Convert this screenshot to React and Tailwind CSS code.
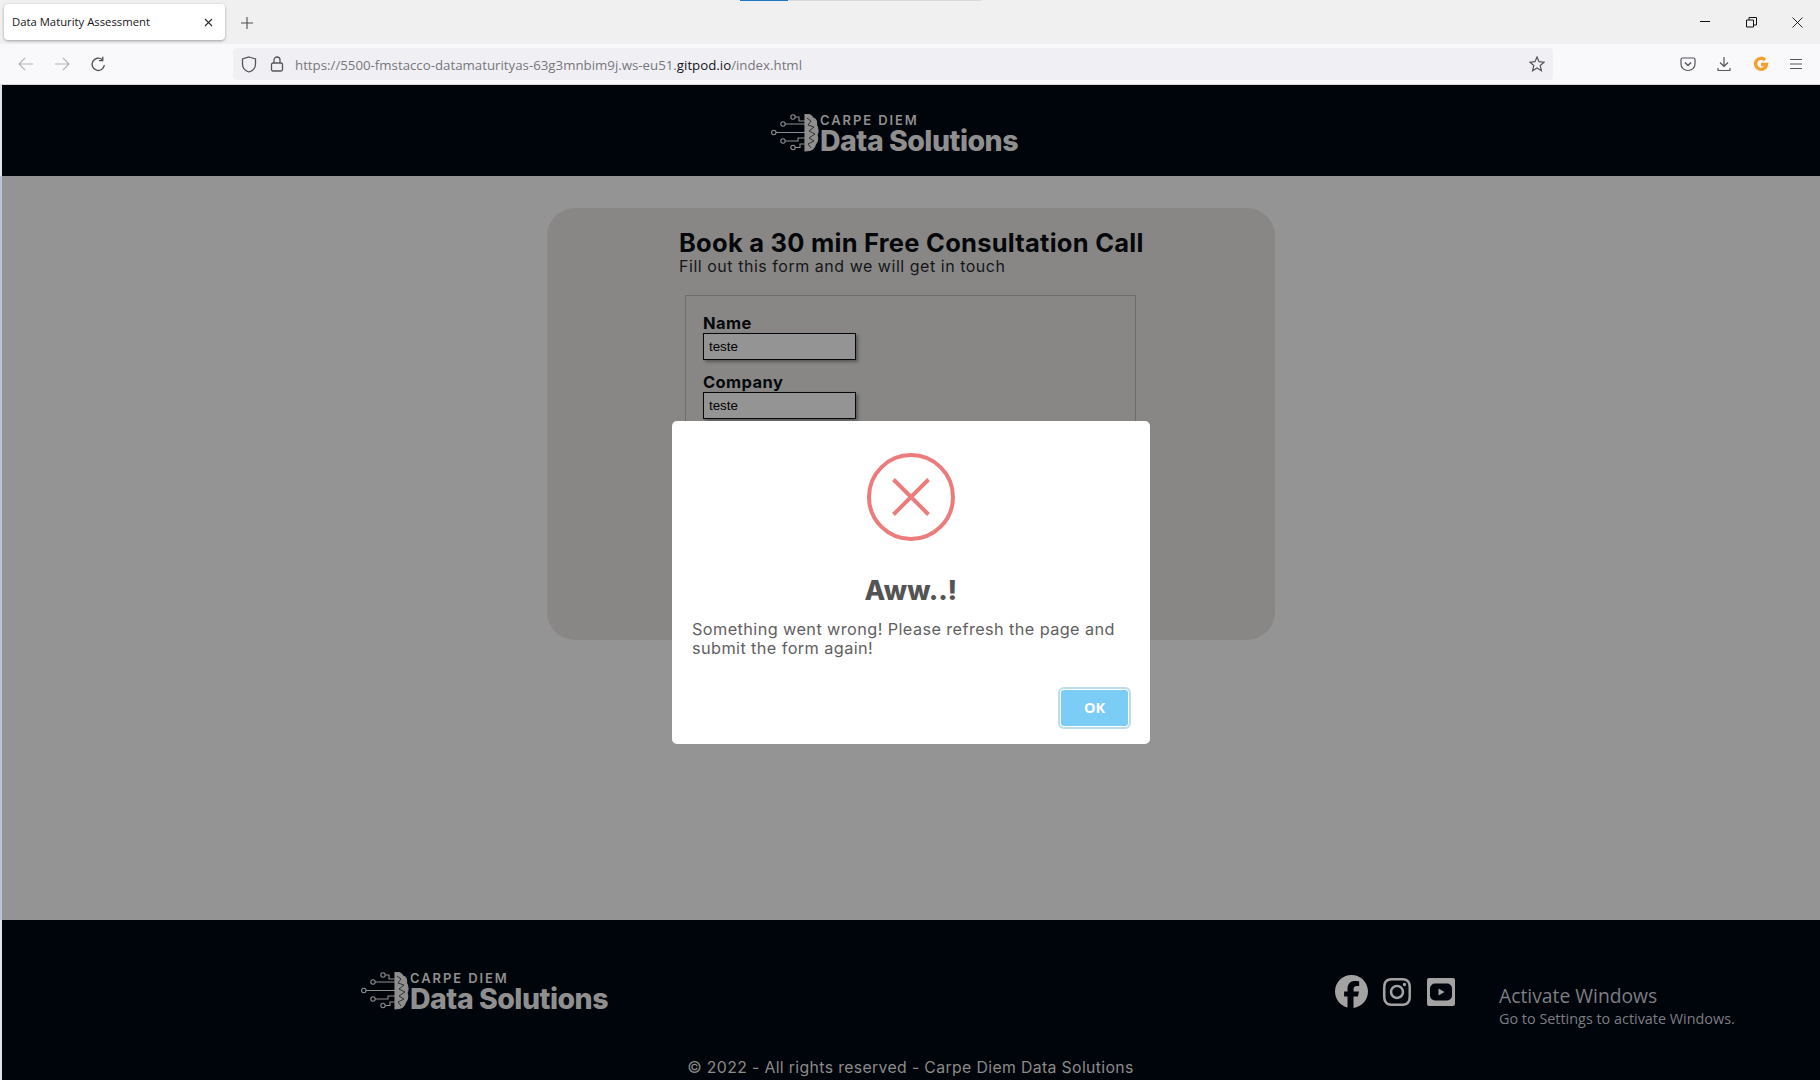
import React from "react";
import { FaFacebook, FaInstagram } from "react-icons/fa6";

const mont = "font-['Inter','Open_Sans',sans-serif]";

function Logo() {
  return (
    <div className="flex items-start h-[41px] w-[250px] shrink-0">
      <svg width="48" height="38" viewBox="0 0 48 38" fill="none" stroke="#8f8f8f" strokeWidth="1.100" className="shrink-0">
        <circle cx="2.800" cy="18.500" r="2.200" />
        <circle cx="12" cy="10" r="2.200" />
        <circle cx="12" cy="27" r="2.200" />
        <circle cx="22" cy="3" r="2.200" />
        <circle cx="22" cy="33.500" r="2.200" />
        <path d="M5 18.500H34M14.200 10H34M14.200 27H27V24H34M24.200 3H28V7H34M24.200 33.500H29V30H34" />
        <path d="M34 0.500C38 -0.500 41 1.500 42 4C45 5 46 8 45.500 11C47.500 14 47.500 19 46 21C47.500 25 46.500 28 44.500 30C44 34 41 37 34 37Z" fill="#8f8f8f" />
        <path d="M36 4L40 7L37 11L43 13L38 17L44 20L38 24L43 27L37 30L40 34" stroke="#24262a" strokeWidth="0.900" />
      </svg>
      <div className={`flex flex-col ml-[1px] ${mont} text-[#8f8f8f]`}>
        <span className="text-[13px] leading-[13px] font-semibold tracking-[1.900px] whitespace-nowrap">CARPE DIEM</span>
        <span className="text-[28.500px] leading-[28px] font-extrabold tracking-[-0.5px] whitespace-nowrap">Data Solutions</span>
      </div>
    </div>
  );
}

function TabBar() {
  return (
    <div className="relative h-[44px] bg-[#f0f0f0] flex items-start pl-[4px] pt-[4px] shrink-0">
      <div className="h-[36px] w-[221px] bg-white rounded-[4px] shadow-[0_1px_3px_rgba(0,0,0,0.35)] flex items-center pl-[8px] pr-[12px] justify-between">
        <span className="font-['Open_Sans',sans-serif] text-[11.300px] pt-[1px] text-[#15141a] whitespace-nowrap">Data Maturity Assessment</span>
        <svg width="9" height="9" viewBox="0 0 9 9" stroke="#2b2a33" strokeWidth="1.100"><path d="M1 1L8 8M8 1L1 8" /></svg>
      </div>
      <svg width="12" height="12" viewBox="0 0 12 12" stroke="#4f4e55" strokeWidth="1.100" className="ml-[16px] mt-[13px]"><path d="M6 0V12M0 6H12" /></svg>
      <div className="absolute top-0 left-[740px] w-[48px] h-[1px] bg-[#1f78c1]" />
      <div className="absolute top-0 left-[788px] w-[193px] h-[1px] bg-[#d9d9d9]" />
      <div className="absolute top-[21px] left-[1700px] w-[10px] h-[1px] bg-[#111]" />
      <svg width="11" height="11" viewBox="0 0 11 11" fill="none" stroke="#111" strokeWidth="1" className="absolute top-[17px] left-[1746px]">
        <path d="M0.500 3H7.500V10H0.500ZM3 3V0.500H10.500V8H7.500" />
      </svg>
      <svg width="11" height="11" viewBox="0 0 11 11" stroke="#111" strokeWidth="0.900" className="absolute top-[17px] left-[1792px]"><path d="M0.500 0.500L10.500 10.500M10.500 0.500L0.500 10.500" /></svg>
    </div>
  );
}

function ToolBar() {
  return (
    <div className="h-[40px] bg-[#f9f9fb] flex items-center shrink-0 relative">
      <svg width="18" height="16" viewBox="0 0 18 16" fill="none" stroke="#b5b5b8" strokeWidth="1.200" className="ml-[17px]"><path d="M16 8H2M8 2L2 8L8 14" /></svg>
      <svg width="18" height="16" viewBox="0 0 18 16" fill="none" stroke="#b5b5b8" strokeWidth="1.200" className="ml-[18px]"><path d="M2 8H16M10 2L16 8L10 14" /></svg>
      <svg width="17" height="17" viewBox="0 0 16 16" fill="none" stroke="#55545b" strokeWidth="1.300" className="ml-[19px]"><path d="M13.500 8.500A5.800 5.800 0 1 1 11.500 3.400" /><path d="M12 0.800V4.400H8.400" /></svg>
      <div className="ml-[126px] w-[1320px] h-[32px] bg-[#f0f0f4] rounded-[4px] flex items-center pl-[8px] pr-[8px]">
        <svg width="16" height="17" viewBox="0 0 16 17" fill="none" stroke="#55545b" strokeWidth="1.300" className="shrink-0"><path d="M8 1L14.500 3V8C14.500 12 11.500 15 8 16C4.500 15 1.500 12 1.500 8V3Z" /></svg>
        <svg width="14" height="16" viewBox="0 0 14 16" fill="none" stroke="#55545b" strokeWidth="1.300" className="shrink-0 ml-[13px]"><rect x="1.500" y="7" width="11" height="8" rx="1.500" /><path d="M4 7V4A3 3 0 0 1 10 4V7" /></svg>
        <span className="ml-[11px] pt-[3px] font-['Open_Sans',sans-serif] text-[13.280px] text-[#77767c] whitespace-nowrap">
          https://5500-fmstacco-datamaturityas-63g3mnbim9j.ws-eu51.<span className="text-[#15141a]">gitpod.io</span>/index.html
        </span>
        <svg width="16" height="16" viewBox="0 0 16 16" fill="none" stroke="#55545b" strokeWidth="1.200" className="ml-auto"><path d="M8 1L10 5.700L15 6.200L11.200 9.500L12.400 14.700L8 12L3.600 14.700L4.800 9.500L1 6.200L6 5.700Z" /></svg>
      </div>
      <svg width="16" height="16" viewBox="0 0 16 16" fill="none" stroke="#55545b" strokeWidth="1.200" className="ml-[127px]"><path d="M2.500 2H13.500A1.500 1.500 0 0 1 15 3.500V8A7 6.500 0 0 1 1 8V3.500A1.500 1.500 0 0 1 2.500 2Z" /><path d="M5 6.500L8 9.500L11 6.500" strokeWidth="1.500" /></svg>
      <svg width="16" height="16" viewBox="0 0 16 16" fill="none" stroke="#55545b" strokeWidth="1.200" className="ml-[20px]"><path d="M8 1V10M4 6.500L8 10.500L12 6.500M2 12V14.500H14V12" /></svg>
      <svg width="16" height="16" viewBox="0 0 16 16" fill="none" stroke="#f4a030" strokeWidth="3.400" className="ml-[21px]"><path d="M12 4A5.500 5.500 0 1 0 13.500 8.500H8" /></svg>
      <svg width="14" height="12" viewBox="0 0 14 12" fill="none" stroke="#55545b" strokeWidth="1.200" className="ml-[20px]"><path d="M1 1.500H13M1 6H13M1 10.500H13" /></svg>
    </div>
  );
}

function Field({ label }) {
  return (
    <div className="flex flex-col">
      <label className={`${mont} text-[16.500px] leading-[16px] font-bold tracking-[0.4px] text-[#06080c]`}>{label}</label>
      <input readOnly value="teste" className="mt-[2px] w-[153px] h-[27px] bg-[#949494] border-[1px] border-[#05070a] shadow-[2px_2px_3px_rgba(0,0,0,0.35)] px-[5px] font-['Liberation_Sans',sans-serif] text-[13.300px] text-black outline-none" />
    </div>
  );
}

export default function App() {
  return (
    <div className="relative w-[1820px] h-[1080px] overflow-hidden bg-[#949494] flex flex-col">
      <TabBar />
      <ToolBar />
      <main className="flex-1 flex flex-col">
        <header className="h-[92px] bg-[#00040b] flex items-center justify-center shrink-0 border-t border-t-[#d8d8d8] border-l-2 border-l-[#e0e3ea]">
          <div className="mr-[30px] mt-[8px]"><Logo /></div>
        </header>
        <section className="flex-1 bg-[#949494] pt-[32px] flex justify-center border-l-2 border-l-[#bcc3d8]">
          <div className="w-[728px] h-[432px] bg-[#888785] rounded-[28px] pl-[132px] pt-[20px]">
            <h1 className={`${mont} text-[25.500px] leading-[30px] font-bold text-[#05070b] tracking-[0.25px] whitespace-nowrap`}>Book a 30 min Free Consultation Call</h1>
            <p className={`${mont} text-[16px] leading-[16px] tracking-[0.53px] text-[#14161a] whitespace-nowrap`}>Fill out this form and we will get in touch</p>
            <div className="ml-[6px] mt-[21px] w-[451px] h-[331px] border border-[#6d6d6b] pl-[17px] pt-[19px] flex flex-col gap-[14px]">
              <Field label="Name" />
              <Field label="Company" />
            </div>
          </div>
        </section>
        <footer className="h-[160px] bg-[#00040b] shrink-0 relative flex flex-col border-l-2 border-l-[#e0e3ea]">
          <div className="flex items-start">
            <div className="ml-[359px] mt-[52px]"><Logo /></div>
            <div className="ml-[724px] mt-[55px] flex items-center text-[#a3a3a3]">
              <FaFacebook size={33} />
              <FaInstagram size={32} className="ml-[13px]" />
              <svg width="28" height="28" viewBox="0 0 28 28" className="shrink-0 ml-[14px]">
                <rect width="28" height="28" rx="2" fill="#a3a3a3" />
                <rect x="3" y="5.500" width="22" height="17" rx="5" fill="#00040b" />
                <path d="M11.500 10.500L17.500 14L11.500 17.500Z" fill="#a3a3a3" />
              </svg>
            </div>
            <div className="ml-[44px] mt-[64px] font-['Open_Sans',sans-serif] text-[#7c7e82]">
              <div className="text-[19.300px] leading-[24px] whitespace-nowrap">Activate Windows</div>
              <div className="text-[14.400px] leading-[22px] whitespace-nowrap">Go to Settings to activate Windows.</div>
            </div>
          </div>
          <p className={`${mont} absolute bottom-[2px] left-0 right-0 text-center text-[15.800px] leading-[20px] tracking-[0.36px] text-[#8b8b89] pr-[1px]`}>© 2022 - All rights reserved - Carpe Diem Data Solutions</p>
        </footer>
      </main>

      <div className="absolute left-[672px] top-[421px] w-[478px] h-[323px] bg-white rounded-[5px] flex flex-col items-center">
        <svg width="90" height="90" viewBox="0 0 90 90" fill="none" stroke="#ec7c7c" className="mt-[31px] shrink-0">
          <circle cx="45" cy="45" r="42" strokeWidth="4" />
          <path d="M27.500 27.500L62.500 62.500M62.500 27.500L27.500 62.500" strokeWidth="4" />
        </svg>
        <h2 className={`${mont} mt-[32px] text-[27px] leading-[34px] font-extrabold tracking-[0.2px] text-[#545454]`}>Aww..!</h2>
        <p className={`${mont} mt-[12px] w-[440px] ml-[2px] text-[16.300px] leading-[19px] tracking-[0.4px] text-[#61605f]`}>Something went wrong! Please refresh the page and submit the form again!</p>
        <button className="absolute right-[22px] bottom-[18px] w-[67px] h-[36px] rounded-[3px] bg-[#7ccdf6] ring-[1px] ring-white ring-offset-0 shadow-[0_0_0_3px_#bcdcec] text-white font-['Open_Sans',sans-serif] font-bold text-[14.500px]">OK</button>
      </div>
    </div>
  );
}
